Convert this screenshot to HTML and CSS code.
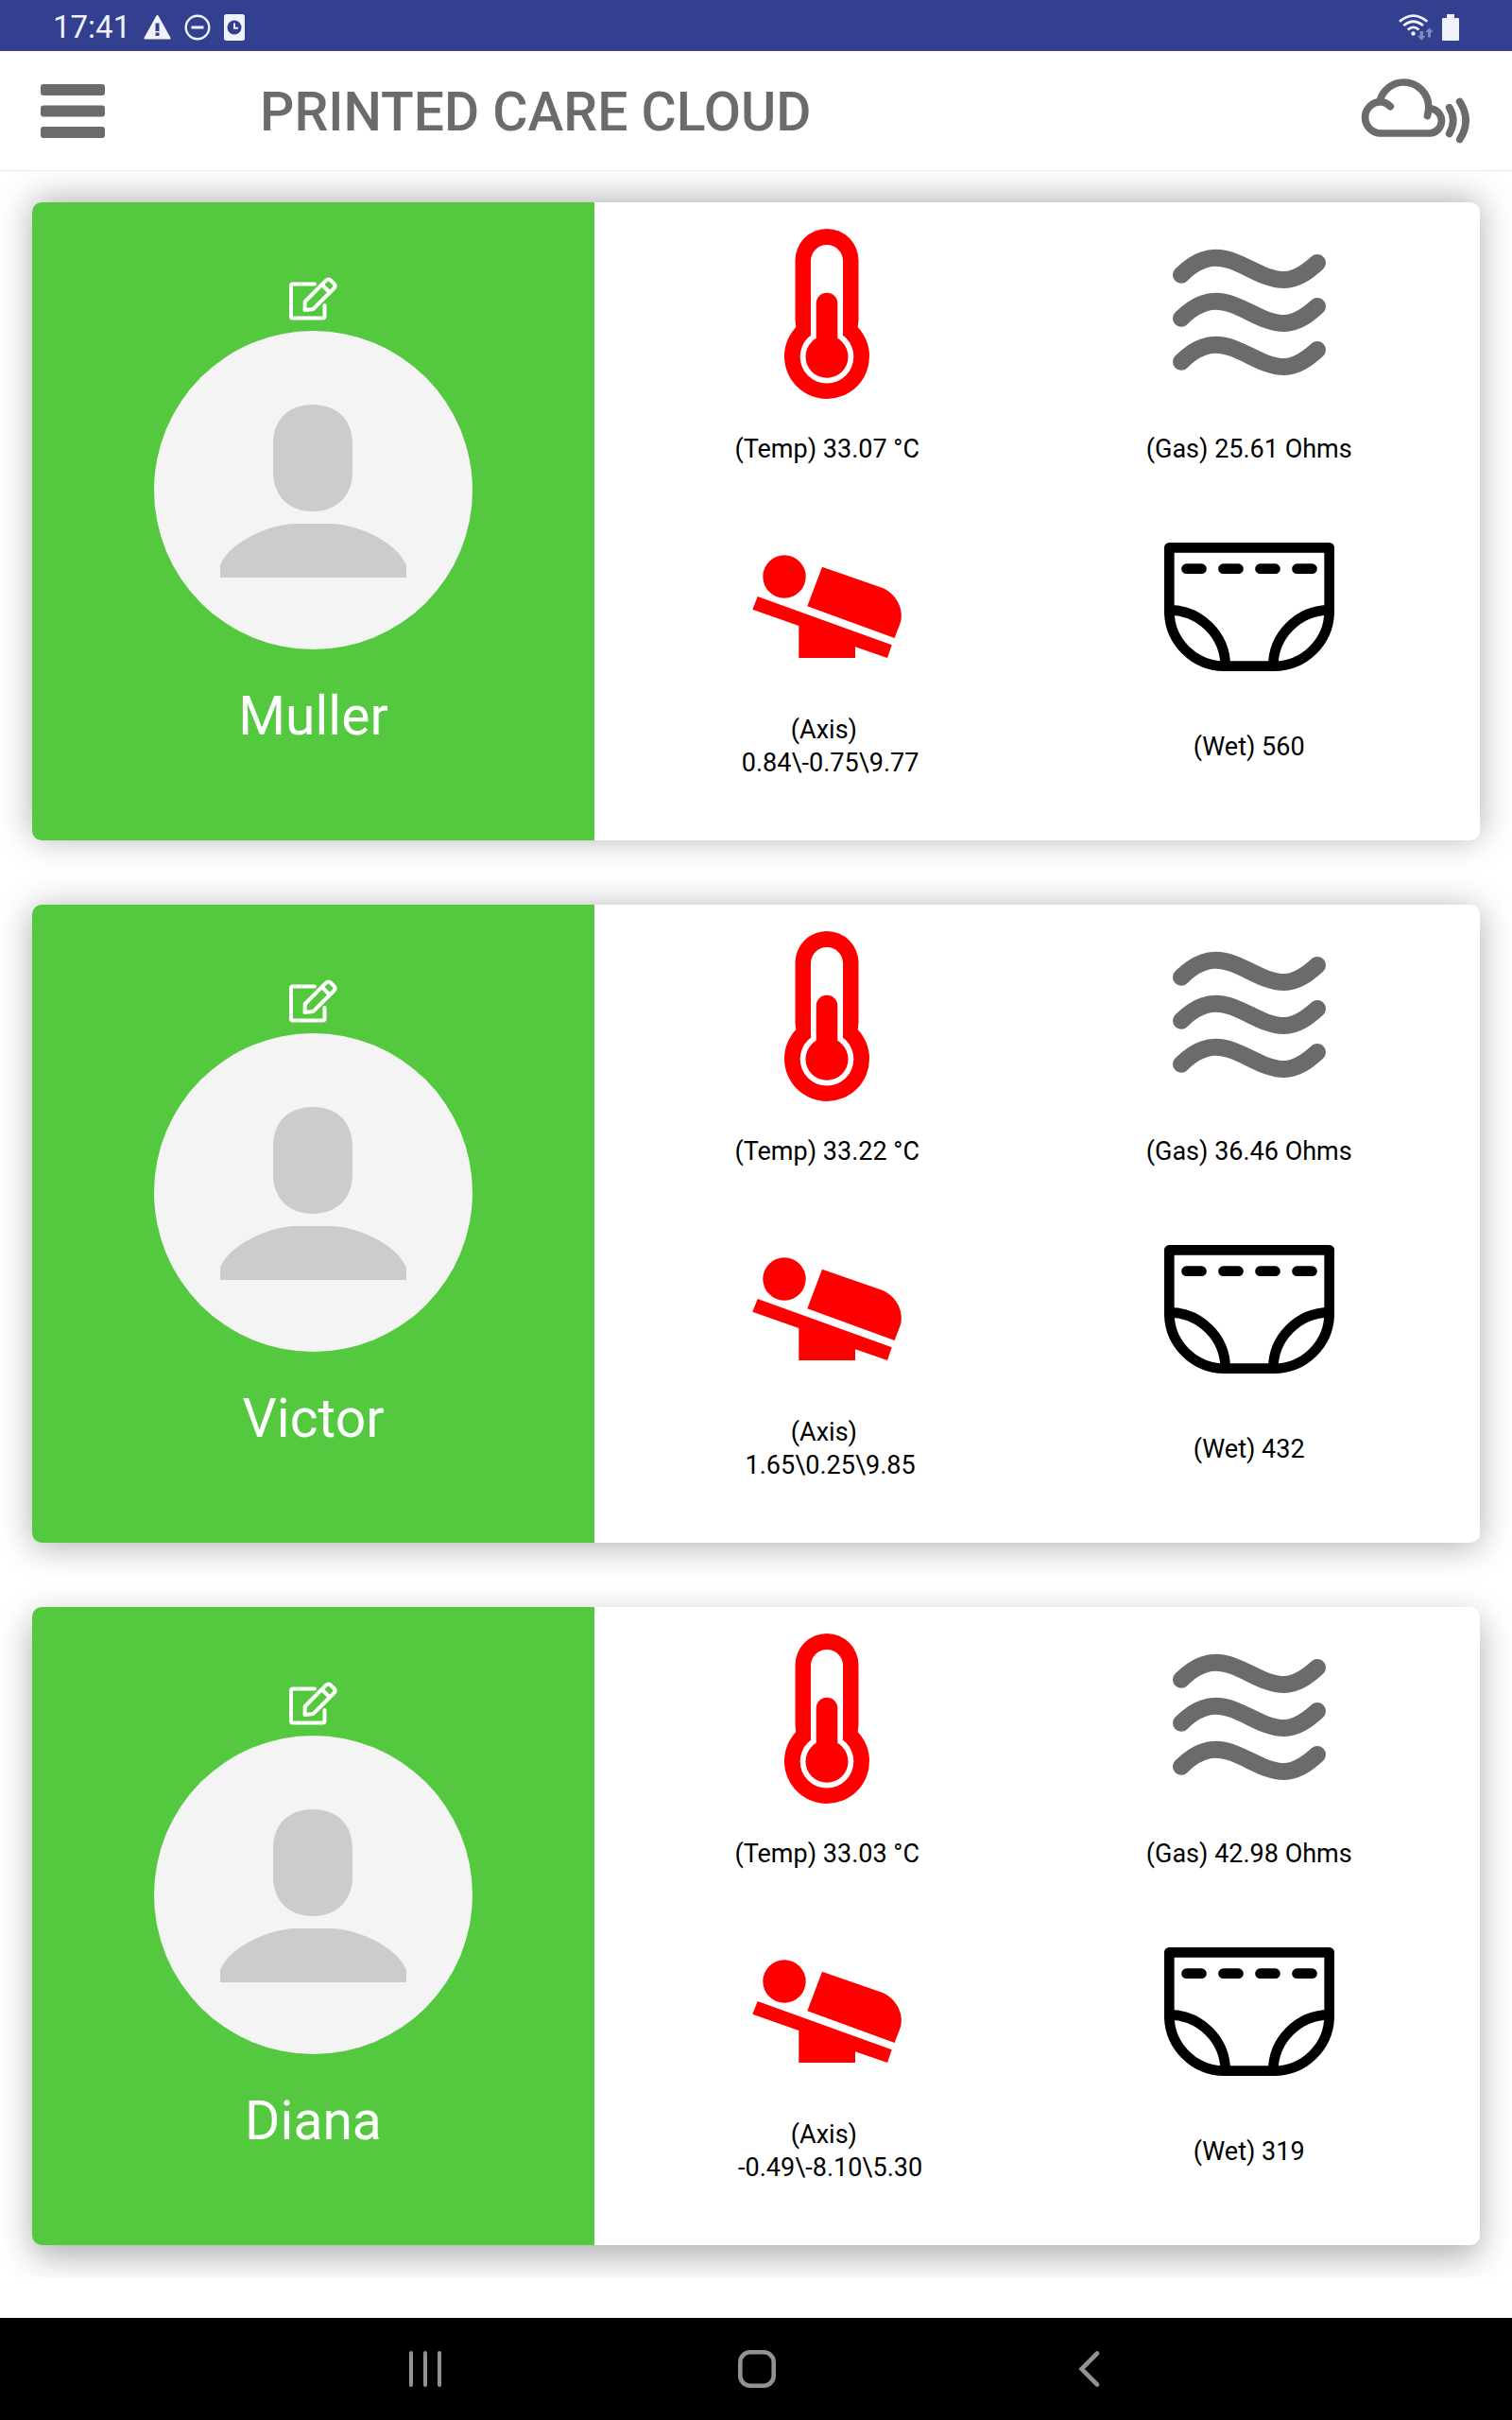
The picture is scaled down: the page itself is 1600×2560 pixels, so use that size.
FILE: index.html
```html
<!DOCTYPE html>
<html lang="en">
<head>
<meta charset="utf-8">
<meta name="viewport" content="width=device-width, initial-scale=1">
<title>Printed Care Cloud</title>
<link rel="stylesheet" href="styles.css">
</head>
<body>
<svg class="sprite" aria-hidden="true">
  <symbol id="edit" viewBox="0 0 51 46">
    <g fill="none" stroke="#fff" stroke-width="4" stroke-linecap="round" stroke-linejoin="round">
      <path d="M27 7.500H4Q2 7.500 2 9.500V41.500Q2 43.500 4 43.500H35.500Q37.500 43.500 37.500 41.500V30"/>
      <path d="M16.800 26L39 3.700Q41.500 1.300 44 3.700L47.400 7Q49.800 9.500 47.400 12L25.500 33.900L16.500 35Z"/>
      <path d="M35.500 9L42 15.500" stroke-linecap="butt"/>
    </g>
  </symbol>
  <symbol id="person" viewBox="0 0 337 337">
    <circle cx="168.500" cy="168.500" r="168.500" fill="#f4f4f4"/>
    <path fill="#ccc" d="M168 78C194 78 210 94 210 120V149C210 174 194 191 168 191S126 174 126 149V120C126 94 142 78 168 78ZM70 261V248C80 222 125 204 150 204H187C212 204 257 222 267 248V261Z"/>
  </symbol>
  <symbol id="temp" viewBox="0 0 180 180">
    <g fill="#f00"><rect x="56.500" width="67" height="130" rx="33.500"/><circle cx="90" cy="135" r="45"/></g>
    <g fill="#fff"><rect x="73" y="17" width="34" height="110" rx="17"/><circle cx="90" cy="135.300" r="28.300"/></g>
    <g fill="#f00"><rect x="78.700" y="67.700" width="22.600" height="64" rx="11.300"/><circle cx="90" cy="135.300" r="22.500"/></g>
  </symbol>
  <symbol id="gas" viewBox="0 0 180 180">
    <g fill="none" stroke="#6b6b6b" stroke-width="18" stroke-linecap="round">
      <path d="M18 48.700C30 37 41 30.700 54 30.700C80 30.700 101 54 127 54C140 54 151 46 162 36"/>
      <path d="M18 94.700C30 83 41 76.700 54 76.700C80 76.700 101 100 127 100C140 100 151 92 162 82"/>
      <path d="M18 140.700C30 129 41 122.700 54 122.700C80 122.700 101 146 127 146C140 146 151 138 162 128"/>
    </g>
  </symbol>
  <symbol id="axis" viewBox="0 0 180 180">
    <g fill="#f00">
      <circle cx="45" cy="58" r="22.700"/>
      <path d="M16.700 79L158.700 130.300L154 144L120 132.300V144H60.300V110L11.300 92.700Z"/>
      <path d="M85 47.700L148.300 69.700C162 75 171 90 168.500 104C167.500 109 164 116 161.700 123L69.300 89.300Z"/>
    </g>
  </symbol>
  <symbol id="wet" viewBox="0 0 180 180">
    <g fill="none" stroke="#000" stroke-width="10.700" stroke-linejoin="round">
      <path d="M5.300 27.300H174.700V94C174.700 127 148 152.700 116 152.700H64C32 152.700 5.300 127 5.300 94Z"/>
      <path d="M5.300 93.300C38 93.300 64.700 120 64.700 152.700M174.700 93.300C142 93.300 115.300 120 115.300 152.700"/>
      <path stroke-linecap="round" d="M23.500 49.700H39.500M62.500 49.700H78.500M101.500 49.700H117.500M140.500 49.700H156.500"/>
    </g>
  </symbol>
</svg>

<div class="statusbar">
  <div class="status-group">
    <span class="clock">17:41</span>
    <svg width="29" height="26" viewBox="0 0 29 26"><path fill="#f1f1f9" d="M14.500 0Q15.300 0 15.800 1L28.500 24Q29 25.500 27.500 25.500H1.500Q0 25.500 .5 24L13.200 1Q13.700 0 14.500 0Z"/><path fill="#33408f" d="M12.500 8.500h4v8.500h-4zM12.500 18.500h4v3.500h-4z"/></svg>
    <svg width="28" height="28" viewBox="0 0 28 28" fill="none" stroke="#f1f1f9" stroke-width="2.400"><circle cx="14" cy="14" r="12.300"/><path d="M7.500 14h13" stroke-width="3"/></svg>
    <svg width="22" height="28" viewBox="0 0 22 28"><rect width="22" height="28" rx="2.500" fill="#f1f1f9"/><circle cx="11" cy="14" r="7.500" fill="#33408f"/><path d="M11 9.500V14.800H15" fill="none" stroke="#f1f1f9" stroke-width="2"/></svg>
  </div>
  <div class="status-group status-right">
    <svg width="37" height="28" viewBox="0 0 37 28"><g fill="none" stroke="#f1f1f9" stroke-width="2.800"><path d="M1 7.800Q15.500-4.600 30.300 7.800M5.300 12Q15.500 3.400 26 12M9.800 16.500Q15.500 11.200 21.500 16.500"/></g><circle cx="15.500" cy="20.500" r="2.200" fill="#f1f1f9"/><path fill="#8289bd" d="M22.500 18h3.500v5h2.500l-4.200 4.800-4.300-4.800h2.500zM31 24.500h3v-5.500h2.800l-4.300-4.500-4.200 4.500h2.700z"/></svg>
    <svg width="18" height="28" viewBox="0 0 18 28"><path fill="#f1f1f9" d="M5 0h8v4h4q1 0 1 1v22q0 1-1 1H1q-1 0-1-1V5q0-1 1-1h4z"/></svg>
  </div>
</div>

<header class="appbar">
  <button class="icon-button" type="button" aria-label="Menu">
    <svg width="68" height="57" viewBox="0 0 68 57" fill="#6b6b6b"><rect width="68" height="12" rx="3"/><rect y="22.500" width="68" height="12" rx="3"/><rect y="45" width="68" height="12" rx="3"/></svg>
  </button>
  <h1 class="title">PRINTED CARE CLOUD</h1>
  <button class="icon-button" type="button" aria-label="Cloud connection">
    <svg width="116" height="69" viewBox="0 0 116 69" fill="none" stroke="#6b6b6b" stroke-width="7.700" stroke-linecap="round" stroke-linejoin="round"><path d="M32.300 29.600C29 26.500 25.500 24.700 21 24.700A16.700 16.700 0 0 0 21 58H73.700A13.200 13.200 0 0 0 76 31.900"/><path d="M21.300 23.500A26.300 26.300 0 0 1 46.500 4A26.300 26.300 0 0 1 72.800 30.300Q72.800 35 71.500 39.500"/><path d="M94.700 30.800Q102.800 44.500 94.700 58.500M105.700 24.500Q118.500 44.500 105.700 64.500"/></svg>
  </button>
</header>

<main class="list">
  <div class="slot">
    <article class="card shadow-high">
      <div class="profile">
        <button class="icon-button" type="button" aria-label="Edit Muller"><svg class="edit"><use href="#edit"/></svg></button>
        <svg class="avatar"><use href="#person"/></svg>
        <h2 class="name">Muller</h2>
      </div>
      <div class="readings">
        <div class="reading"><svg class="sensor"><use href="#temp"/></svg><p class="value">(Temp) 33.07 °C</p></div>
        <div class="reading"><svg class="sensor"><use href="#gas"/></svg><p class="value">(Gas) 25.61 Ohms</p></div>
        <div class="reading"><svg class="sensor"><use href="#axis"/></svg><p class="value">(Axis)&nbsp;<br>&nbsp;0.84\-0.75\9.77</p></div>
        <div class="reading"><svg class="sensor"><use href="#wet"/></svg><p class="value">(Wet) 560</p></div>
      </div>
    </article>
  </div>
  <div class="slot">
    <article class="card shadow-mid">
      <div class="profile">
        <button class="icon-button" type="button" aria-label="Edit Victor"><svg class="edit"><use href="#edit"/></svg></button>
        <svg class="avatar"><use href="#person"/></svg>
        <h2 class="name">Victor</h2>
      </div>
      <div class="readings">
        <div class="reading"><svg class="sensor"><use href="#temp"/></svg><p class="value">(Temp) 33.22 °C</p></div>
        <div class="reading"><svg class="sensor"><use href="#gas"/></svg><p class="value">(Gas) 36.46 Ohms</p></div>
        <div class="reading"><svg class="sensor"><use href="#axis"/></svg><p class="value">(Axis)&nbsp;<br>&nbsp;1.65\0.25\9.85</p></div>
        <div class="reading"><svg class="sensor"><use href="#wet"/></svg><p class="value">(Wet) 432</p></div>
      </div>
    </article>
  </div>
  <div class="slot">
    <article class="card shadow-low">
      <div class="profile">
        <button class="icon-button" type="button" aria-label="Edit Diana"><svg class="edit"><use href="#edit"/></svg></button>
        <svg class="avatar"><use href="#person"/></svg>
        <h2 class="name">Diana</h2>
      </div>
      <div class="readings">
        <div class="reading"><svg class="sensor"><use href="#temp"/></svg><p class="value">(Temp) 33.03 °C</p></div>
        <div class="reading"><svg class="sensor"><use href="#gas"/></svg><p class="value">(Gas) 42.98 Ohms</p></div>
        <div class="reading"><svg class="sensor"><use href="#axis"/></svg><p class="value">(Axis)&nbsp;<br>&nbsp;-0.49\-8.10\5.30</p></div>
        <div class="reading"><svg class="sensor"><use href="#wet"/></svg><p class="value">(Wet) 319</p></div>
      </div>
    </article>
  </div>
</main>

<nav class="navbar" aria-label="System">
  <button class="icon-button" type="button" aria-label="Recent apps"><svg width="40" height="40" viewBox="0 0 40 40" stroke="#929292" stroke-width="4" stroke-linecap="round"><path d="M5 3V37M20 3V37M35 3V37"/></svg></button>
  <button class="icon-button" type="button" aria-label="Home"><svg width="40" height="40" viewBox="0 0 40 40" fill="none" stroke="#929292" stroke-width="4.600"><rect x="2.300" y="2.300" width="35.400" height="35.400" rx="10.500"/></svg></button>
  <button class="icon-button" type="button" aria-label="Back"><svg width="40" height="40" viewBox="0 0 40 40" fill="none" stroke="#929292" stroke-width="4.600" stroke-linecap="round"><path d="M29 3.500L12.500 20L29 36.500"/></svg></button>
</nav>
</body>
</html>
```
FILE: styles.css
```css
* {
  box-sizing: border-box;
}

body {
  margin: 0;
  min-height: 100vh;
  display: flex;
  flex-direction: column;
  background: #fff;
  color: #000;
  font-family: Roboto, "Liberation Sans", sans-serif;
}

svg {
  display: block;
  flex: none;
}

.sprite {
  display: none;
}

.icon-button {
  padding: 0;
  border: 0;
  background: none;
  cursor: pointer;
}

/* System status bar */
.statusbar {
  display: flex;
  align-items: center;
  justify-content: space-between;
  height: 54px;
  padding: 3px 56px 0;
  background: #33408f;
  color: #f1f1f9;
}

.status-group {
  display: flex;
  align-items: center;
  gap: 14px;
}

.status-right {
  gap: 9px;
}

.clock {
  font-size: 33px;
  line-height: 40px;
}

/* App header */
.appbar {
  display: flex;
  align-items: center;
  height: 127px;
  padding: 0 45px 0 43px;
  border-bottom: 1px solid #ebebeb;
}

.title {
  flex: 1;
  margin: 0;
  padding: 4px 0 0 164px;
  color: #6b6b6b;
  font-size: 57px;
  font-weight: 500;
  line-height: 68px;
}

/* Patient cards */
.list {
  flex: 1;
}

.slot {
  padding: 34px;
  overflow: hidden;
}

.slot:first-child {
  padding-top: 33px;
}

.card {
  display: grid;
  grid-template-columns: 595fr 937fr;
  border-radius: 10px;
  background: #fff;
}

.shadow-high {
  box-shadow: 0 -3px 36px rgba(0, 0, 0, 0.32);
}

.shadow-mid {
  box-shadow: 0 4px 36px rgba(0, 0, 0, 0.32);
}

.shadow-low {
  box-shadow: 0 12px 36px rgba(0, 0, 0, 0.32);
}

.profile {
  display: flex;
  flex-direction: column;
  align-items: center;
  padding: 79px 0 78px;
  border-radius: 10px 0 0 10px;
  background: #54c940;
}

.edit {
  width: 51px;
  height: 46px;
}

.avatar {
  width: 337px;
  height: 337px;
  margin-top: 11px;
}

.name {
  margin: 35px 0 0;
  color: #fff;
  font-size: 57px;
  font-weight: 400;
  line-height: 72px;
}

.readings {
  display: grid;
  grid-template-columns: 1fr 1fr;
  grid-auto-rows: 310px;
  padding: 28px 21px 27px 23px;
}

.reading {
  display: flex;
  flex-direction: column;
  align-items: center;
}

.sensor {
  width: 180px;
  height: 180px;
}

.value {
  display: flex;
  flex-direction: column;
  justify-content: center;
  min-height: 116px;
  margin: 0;
  font-size: 27px;
  line-height: 35px;
  text-align: center;
}

.reading:nth-child(-n+2) .value {
  min-height: 106px;
}

/* System navigation */
.navbar {
  display: flex;
  align-items: center;
  justify-content: center;
  gap: 311px;
  height: 108px;
  padding-left: 2px;
  background: #000;
}
```
